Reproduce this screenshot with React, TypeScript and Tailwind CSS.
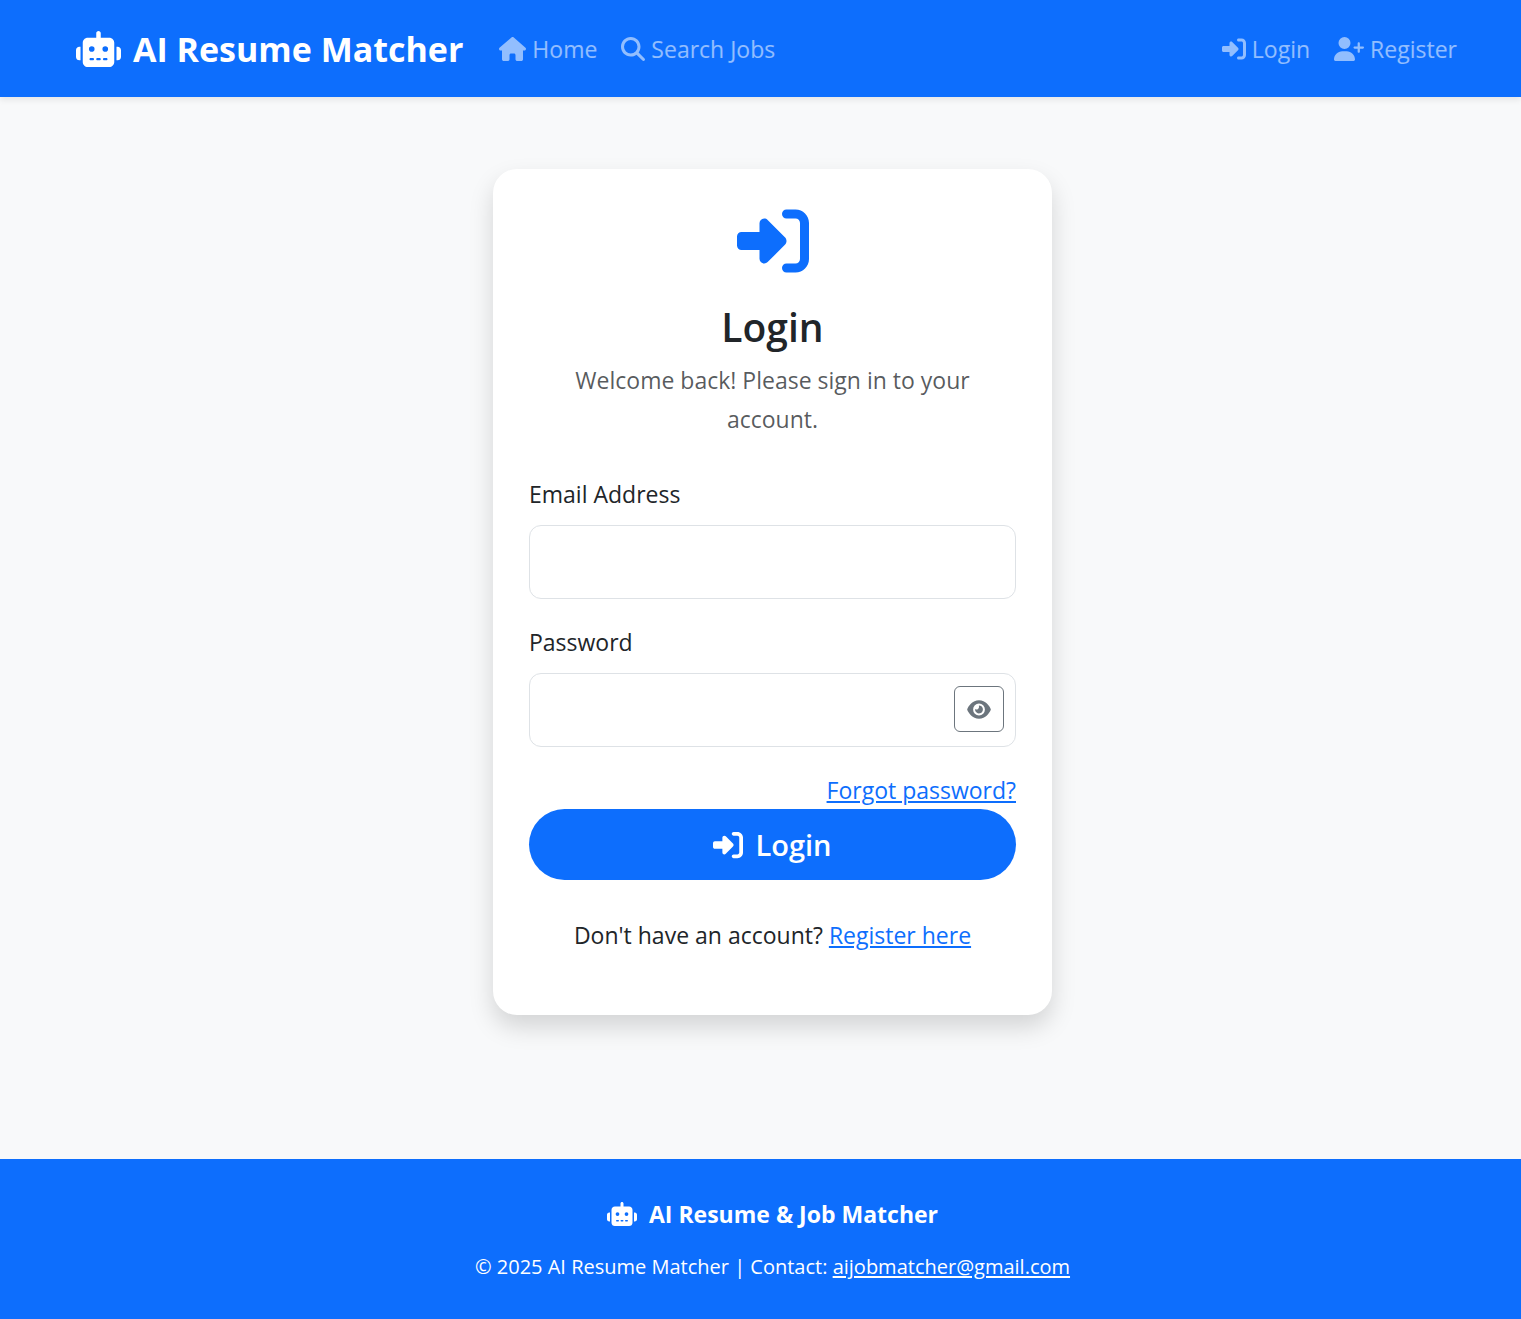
import { useState } from "react";
import {
  FaEye,
  FaHouse,
  FaMagnifyingGlass,
  FaRightToBracket,
  FaRobot,
  FaUserPlus,
} from "react-icons/fa6";

const linkClass = "text-[#0d6efd] underline underline-offset-2 decoration-2";

function Header() {
  return (
    <header className="bg-[#0d6efd] pb-[23px] pl-[76px] pr-[64px] pt-6 shadow-[0_3px_6px_rgba(0,0,0,0.08)]">
      <nav className="flex items-center text-[23px] leading-[50px] text-white/55">
        <a href="#" className="flex items-center gap-3 text-[34px] font-bold text-white">
          <FaRobot className="h-9 w-[45px]" />
          AI Resume Matcher
        </a>
        <div className="ml-9 flex gap-6">
          <a href="#" className="flex items-center gap-1.5">
            <FaHouse className="h-6 w-[27px]" />
            Home
          </a>
          <a href="#" className="flex items-center gap-1.5">
            <FaMagnifyingGlass className="size-6" />
            Search Jobs
          </a>
        </div>
        <div className="ml-auto flex gap-6">
          <a href="#" className="flex items-center gap-1.5">
            <FaRightToBracket className="size-6" />
            Login
          </a>
          <a href="#" className="flex items-center gap-1.5">
            <FaUserPlus className="h-6 w-[30px]" />
            Register
          </a>
        </div>
      </nav>
    </header>
  );
}

function LoginCard() {
  const [visible, setVisible] = useState(false);
  return (
    <section className="w-full max-w-[559px] rounded-3xl bg-white p-9 shadow-[0_12px_24px_rgba(0,0,0,0.15)]">
      <div className="text-center">
        <FaRightToBracket className="mx-auto size-[72px] text-[#0d6efd]" />
        <h1 className="mt-6 text-[39px] font-semibold leading-[52px]">Login</h1>
        <p className="mt-2 px-9 leading-[39px] text-[#212529]/75">
          Welcome back! Please sign in to your account.
        </p>
      </div>
      <form className="mt-9" onSubmit={(e) => e.preventDefault()}>
        <label htmlFor="email" className="block leading-[38px]">
          Email Address
        </label>
        <input
          id="email"
          type="email"
          className="mt-3 block h-[74px] w-full rounded-xl border border-[#dee2e6] px-6"
        />
        <label htmlFor="password" className="mt-6 block leading-[38px]">
          Password
        </label>
        <div className="relative mt-3">
          <input
            id="password"
            type={visible ? "text" : "password"}
            className="block h-[74px] w-full rounded-xl border border-[#dee2e6] pl-6 pr-20"
          />
          <button
            type="button"
            aria-label="Show password"
            onClick={() => setVisible(!visible)}
            className="absolute right-3 top-[13px] flex h-[46px] w-[50px] items-center justify-center rounded-md border border-[#6c757d] text-[#6c757d]"
          >
            <FaEye className="h-[21px] w-6" />
          </button>
        </div>
        <div className="mt-6 text-right leading-[38px]">
          <a href="#" className={linkClass}>
            Forgot password?
          </a>
        </div>
        <button
          type="submit"
          className="flex h-[71px] w-full items-center justify-center gap-3 rounded-full bg-[#0d6efd] text-[29px] font-semibold text-white"
        >
          <FaRightToBracket className="size-[30px]" />
          Login
        </button>
      </form>
      <p className="mb-6 mt-9 text-center leading-[39px]">
        Don't have an account?{" "}
        <a href="#" className={linkClass}>
          Register here
        </a>
      </p>
    </section>
  );
}

function Footer() {
  return (
    <footer className="bg-[#0d6efd] pb-[34px] pl-6 pt-9 text-center text-white">
      <div className="flex items-center justify-center gap-3 font-bold leading-[38px]">
        <FaRobot className="h-6 w-[30px]" />
        AI Resume &amp; Job Matcher
      </div>
      <p className="mt-4 text-[20px] leading-9">
        © 2025 AI Resume Matcher | Contact:{" "}
        <a href="mailto:aijobmatcher@gmail.com" className="underline decoration-2 underline-offset-2">
          aijobmatcher@gmail.com
        </a>
      </p>
    </footer>
  );
}

export default function App() {
  return (
    <div className="flex min-h-screen flex-col bg-[#f8f9fa] font-['Open_Sans',sans-serif] text-[23px] text-[#212529]">
      <Header />
      <main className="flex flex-1 items-start justify-center pb-36 pl-6 pt-[72px]">
        <LoginCard />
      </main>
      <Footer />
    </div>
  );
}
